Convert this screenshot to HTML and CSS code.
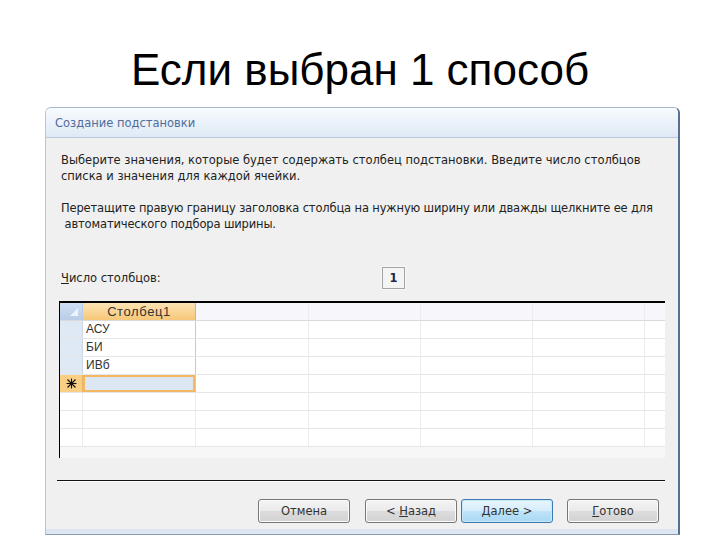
FILE: index.html
```html
<!DOCTYPE html>
<html lang="ru">
<head>
<meta charset="utf-8">
<link rel="stylesheet" href="styles.css">
</head>
<body>
<h1 class="slide-title">Если выбран 1 способ</h1>
<div class="dialog">
  <div class="dlg-head">Создание подстановки</div>
  <div class="dlg-body">
    <p class="para">Выберите значения, которые будет содержать столбец подстановки. Введите число столбцов<br>списка и значения для каждой ячейки.</p>
    <p class="para">Перетащите правую границу заголовка столбца на нужную ширину или дважды щелкните ее для<br>&nbsp;автоматического подбора ширины.</p>
    <div class="count-row">
      <span class="count-label"><u>Ч</u>исло столбцов:</span>
      <span class="count-box">1</span>
    </div>
    <div class="grid">
      <div class="row head">
        <div class="cell sel sel-head"><svg width="10" height="10" viewBox="0 0 10 10"><polygon points="9,1 9,9 1,9" fill="#eef4fb"/></svg></div>
        <div class="cell c1 c1-head">Столбец1</div>
        <div class="cell w113"></div>
        <div class="cell w112"></div>
        <div class="cell w112"></div>
        <div class="cell w112"></div>
        <div class="cell rest"></div>
      </div>
      <div class="row">
        <div class="cell sel sel-data"></div>
        <div class="cell c1">АСУ</div>
        <div class="cell w113"></div><div class="cell w112"></div><div class="cell w112"></div><div class="cell w112"></div><div class="cell rest"></div>
      </div>
      <div class="row">
        <div class="cell sel sel-data"></div>
        <div class="cell c1">БИ</div>
        <div class="cell w113"></div><div class="cell w112"></div><div class="cell w112"></div><div class="cell w112"></div><div class="cell rest"></div>
      </div>
      <div class="row">
        <div class="cell sel sel-data"></div>
        <div class="cell c1">ИВб</div>
        <div class="cell w113"></div><div class="cell w112"></div><div class="cell w112"></div><div class="cell w112"></div><div class="cell rest"></div>
      </div>
      <div class="row">
        <div class="cell sel sel-new"><svg width="11" height="11" viewBox="0 0 11 11"><g stroke="#111" stroke-width="1.1"><line x1="5.5" y1="0.5" x2="5.5" y2="10.5"/><line x1="0.5" y1="5.5" x2="10.5" y2="5.5"/><line x1="1.5" y1="1.5" x2="9.5" y2="9.5"/><line x1="9.5" y1="1.5" x2="1.5" y2="9.5"/></g></svg></div>
        <div class="cell c1 c1-new"></div>
        <div class="cell w113"></div><div class="cell w112"></div><div class="cell w112"></div><div class="cell w112"></div><div class="cell rest"></div>
      </div>
      <div class="row">
        <div class="cell sel"></div><div class="cell c1 c1-empty"></div>
        <div class="cell w113"></div><div class="cell w112"></div><div class="cell w112"></div><div class="cell w112"></div><div class="cell rest"></div>
      </div>
      <div class="row">
        <div class="cell sel"></div><div class="cell c1 c1-empty"></div>
        <div class="cell w113"></div><div class="cell w112"></div><div class="cell w112"></div><div class="cell w112"></div><div class="cell rest"></div>
      </div>
      <div class="row">
        <div class="cell sel"></div><div class="cell c1 c1-empty"></div>
        <div class="cell w113"></div><div class="cell w112"></div><div class="cell w112"></div><div class="cell w112"></div><div class="cell rest"></div>
      </div>
    </div>
    <div class="sep"></div>
    <div class="buttons">
      <button class="btn gap15">Отмена</button>
      <button class="btn gap4">&lt; <u>Н</u>азад</button>
      <button class="btn btn-default gap14"><u>Д</u>алее &gt;</button>
      <button class="btn"><u>Г</u>отово</button>
    </div>
  </div>
</div>
</body>
</html>
```

FILE: styles.css
```css
html, body {
  margin: 0;
  padding: 0;
}
body {
  width: 720px;
  height: 540px;
  overflow: hidden;
  background: #ffffff;
  font-family: "Liberation Sans", Arial, sans-serif;
}
.slide-title {
  margin: 0;
  padding-top: 47px;
  height: 60px;
  font-size: 44px;
  line-height: 46px;
  font-weight: normal;
  text-align: center;
  color: #000;
}
.dialog {
  margin-left: 45px;
  width: 635px;
  height: 428px;
  box-sizing: border-box;
  background: #f0f0f0;
  border-top: 1px solid #a7b7cc;
  border-left: 1px solid #b9c6d6;
  border-right: 2px solid #56708f;
  border-bottom: 1px solid #8a9bb2;
  border-radius: 6px 6px 0 0;
  overflow: hidden;
  display: flex;
  flex-direction: column;
  font-family: "DejaVu Sans", Verdana, sans-serif;
}
.dlg-head {
  height: 29px;
  flex: none;
  background: linear-gradient(#f8fbfe, #dfe9f6);
  border-bottom: 1px solid #b8cadf;
  padding-left: 9px;
  font-size: 11.5px;
  line-height: 30px;
  color: #4f6d9b;
}
.dlg-body {
  flex: 1;
  padding: 0 13px 0 15px;
  border-bottom: 5px solid #dce6f2;
  font-size: 11.5px;
  color: #222;
}
.para {
  margin: 14px 0 0 0;
  line-height: 16px;
  white-space: nowrap;
}
.para + .para {
  margin-top: 16px;
  letter-spacing: -0.15px;
}
.count-row {
  margin-top: 35px;
  height: 22px;
  display: flex;
  align-items: center;
}
.count-label {
  width: 321px;
}
.count-box {
  width: 21px;
  height: 20px;
  box-sizing: content-box;
  border: 1px solid #a4a4a4;
  box-shadow: 0 0 0 1px #f8f8f8;
  background: #f4f4f4;
  text-align: center;
  line-height: 20px;
  font-weight: bold;
  color: #1c2748;
}
.grid {
  margin: 12px 0 0 -2px;
  width: 606px;
  height: 157px;
  box-sizing: border-box;
  border-top: 2px solid #000;
  border-left: 1px solid #000;
  background: #f7f7f7;
  overflow: hidden;
}
.row {
  display: flex;
  height: 18px;
  box-sizing: border-box;
  border-bottom: 1px solid #e6e6e6;
  background: #fff;
}
.cell {
  height: 100%;
  box-sizing: border-box;
  border-right: 1px solid #ececec;
  flex: none;
  line-height: 17px;
  font-family: "Liberation Sans", Arial, sans-serif;
  font-size: 12px;
  color: #333;
  overflow: hidden;
}
.sel { width: 23px; }
.c1 { width: 113px; padding-left: 3px; border-right-color: #c9c9c9; }
.w113 { width: 113px; }
.w112 { width: 112px; }
.rest { flex: 1; border-right: none; }
.head {
  background: #f6f6fb;
  border-bottom-color: #dadada;
}
.sel-head {
  background: linear-gradient(#cfdff2, #b9cde8);
  display: flex;
  align-items: flex-end;
  justify-content: flex-end;
  padding: 0 3px 3px 0;
  border-right-color: #b9cde8;
}
.c1-head {
  background: linear-gradient(#fbe3b4, #f7c778);
  text-align: center;
  padding-left: 0;
  font-size: 13px;
  letter-spacing: 0.6px;
  border-right-color: #e0b070;
}
.sel-data {
  background: #dfe8f5;
  border-right-color: #cbd6e6;
}
.sel-new {
  background: #f9cf86;
  display: flex;
  align-items: center;
  justify-content: center;
  border-right-color: #eab560;
}
.c1-new {
  background: #dde6f3;
  box-shadow: inset 0 0 0 2px #f4b862;
}
.c1-empty { border-right-color: #ececec; }
.sep {
  margin: 22px 0 0 -4px;
  width: 608px;
  height: 1px;
  background: #111;
  box-shadow: 0 1px 0 #ffffff;
}
.buttons {
  margin-top: 18px;
  display: flex;
  justify-content: flex-end;
  padding-right: 6px;
}
.btn {
  width: 92px;
  height: 24px;
  box-sizing: border-box;
  border: 1px solid #777;
  border-radius: 3px;
  background: linear-gradient(#f3f3f3 0%, #ebebeb 48%, #dcdcdc 52%, #d2d2d2 100%);
  box-shadow: inset 0 0 0 1px #fbfbfb;
  font-family: "DejaVu Sans", Verdana, sans-serif;
  font-size: 11.5px;
  color: #333;
  padding: 0;
}
.btn-default {
  border-color: #3d7bad;
  background: linear-gradient(#e7f5fd 0%, #d6eefb 48%, #bfe3f8 52%, #a9d8f4 100%);
  box-shadow: inset 0 0 0 1px #c7e8fb;
}
.gap15 { margin-right: 15px; }
.gap4 { margin-right: 4px; }
.gap14 { margin-right: 14px; }
```
